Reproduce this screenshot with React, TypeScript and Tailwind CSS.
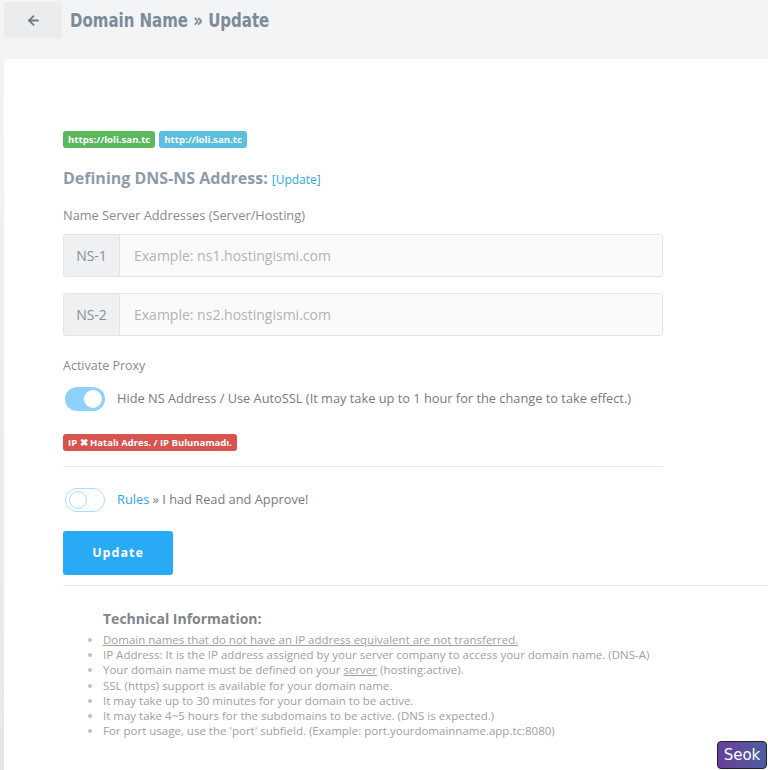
import { ArrowLeft } from "lucide-react";

const info = [
  "IP Address: It is the IP address assigned by your server company to access your domain name. (DNS-A)",
  "__server__",
  "SSL (https) support is available for your domain name.",
  "It may take up to 30 minutes for your domain to be active.",
  "It may take 4~5 hours for the subdomains to be active. (DNS is expected.)",
  "For port usage, use the 'port' subfield. (Example: port.yourdomainname.app.tc:8080)",
];

function NsInput({ label, placeholder }: { label: string; placeholder: string }) {
  return (
    <div className="flex h-[43px] w-[600px] overflow-hidden rounded-[3px] border border-[#e2e5e8]">
      <span className="flex w-[56px] shrink-0 items-center justify-center border-r border-[#e2e5e8] bg-[#eef0f2] text-[14px] text-[#8a8f95]">
        {label}
      </span>
      <input
        className="flex-1 bg-[#fafafa] px-[14px] text-[14px] text-[#555] outline-none placeholder:text-[#b3b3b3]"
        placeholder={placeholder}
      />
    </div>
  );
}

export default function App() {
  return (
    <div className="relative h-[770px] w-[768px] overflow-hidden bg-gradient-to-b from-[#f3f4f5] to-[#e6e7e9] font-['Open_Sans',sans-serif]">
      <div className="flex h-[59px] items-start gap-[8px] pl-[4px] pt-[2px]">
        <button className="flex h-[36px] w-[58px] items-center justify-center rounded-[3px] bg-[#ebecee] text-[#707a84]">
          <ArrowLeft size={15} strokeWidth={3} />
        </button>
        <h1 className="mt-[4px] origin-left scale-x-[0.75] whitespace-nowrap font-['DejaVu_Sans',sans-serif] text-[20px] font-bold leading-[28px] text-[#7b8b9b]">
          Domain Name » Update
        </h1>
      </div>

      <div className="ml-[4px] h-[720px] rounded-tl-[6px] bg-white pt-[72px]">
        <div className="pl-[59px]">
          <div className="flex gap-[4px]">
            <span className="h-[17px] rounded-[3px] bg-[#5cb85c] px-[5px] text-[9.6px] font-bold leading-[17px] text-white">
              https://loli.san.tc
            </span>
            <span className="h-[17px] rounded-[3px] bg-[#5bc0de] px-[5px] text-[9.6px] font-bold leading-[17px] text-white">
              http://loli.san.tc
            </span>
          </div>

          <div className="mt-[18px] flex items-baseline gap-[4px]">
            <h2 className="text-[16px] font-bold text-[#8e9aab]">Defining DNS-NS Address:</h2>
            <a className="text-[12px] text-[#2ea8e6]">[Update]</a>
          </div>

          <p className="mt-[16px] text-[12.8px] text-[#8a8a8a]">Name Server Addresses (Server/Hosting)</p>

          <div className="mt-[9px] flex flex-col gap-[16px]">
            <NsInput label="NS-1" placeholder="Example: ns1.hostingismi.com" />
            <NsInput label="NS-2" placeholder="Example: ns2.hostingismi.com" />
          </div>

          <p className="mt-[21px] text-[12.5px] text-[#8a8a8a]">Activate Proxy</p>

          <div className="mt-[11px] flex items-center gap-[12px] pl-[2px]">
            <span className="flex h-[24px] w-[40px] items-center justify-end rounded-full bg-[#8fd1fb] px-[3px]">
              <span className="h-[18px] w-[18px] rounded-full bg-white" />
            </span>
            <span className="text-[12.8px] text-[#7a7a7a]">
              Hide NS Address / Use AutoSSL (It may take up to 1 hour for the change to take effect.)
            </span>
          </div>

          <span className="mt-[23px] inline-block h-[17px] rounded-[3px] bg-[#d9534f] px-[5px] text-[9.5px] font-bold leading-[17px] text-white">
            IP ✖ Hatalı Adres. / IP Bulunamadı.
          </span>

          <hr className="mt-[14px] w-[600px] border-[#e8e8e8]" />

          <div className="mt-[21px] flex items-center gap-[12px] pl-[2px]">
            <span className="flex h-[24px] w-[40px] items-center rounded-full border border-[#a9dcfb] bg-white px-[3px]">
              <span className="h-[18px] w-[18px] rounded-full border border-[#a9dcfb] bg-white" />
            </span>
            <span className="text-[12.8px] text-[#7a7a7a]">
              <a className="text-[#2ea8e6]">Rules</a> » I had Read and Approve!
            </span>
          </div>

          <button className="mt-[19px] h-[44px] w-[110px] rounded-[3px] bg-[#29aaf5] text-[12.5px] font-bold tracking-[1px] text-white">
            Update
          </button>
        </div>

        <hr className="ml-[59px] mt-[10px] border-[#e8e8e8]" />

        <div className="pl-[99px] pt-[24px]">
          <h3 className="text-[14px] font-bold leading-[18px] text-[#7f858b]">Technical Information:</h3>
          <ul className="mt-[4px] list-disc pl-0 text-[11.5px] leading-[15.2px] text-[#a0a0a0] marker:text-[#c0c0c0]">
            <li>
              <span className="underline">Domain names that do not have an IP address equivalent are not transferred.</span>
            </li>
            {info.map((t) =>
              t === "__server__" ? (
                <li key={t}>
                  Your domain name must be defined on your <span className="underline">server</span> (hosting:active).
                </li>
              ) : (
                <li key={t}>{t}</li>
              )
            )}
          </ul>
        </div>
      </div>

      <button className="absolute bottom-[1px] right-[1px] h-[28px] w-[50px] rounded-[4px] border border-[#222] bg-gradient-to-r from-[#6a3d9a] to-[#4a5ea0] text-[15px] leading-[24px] text-white font-['DejaVu_Sans',sans-serif]">
        Seok
      </button>
    </div>
  );
}
